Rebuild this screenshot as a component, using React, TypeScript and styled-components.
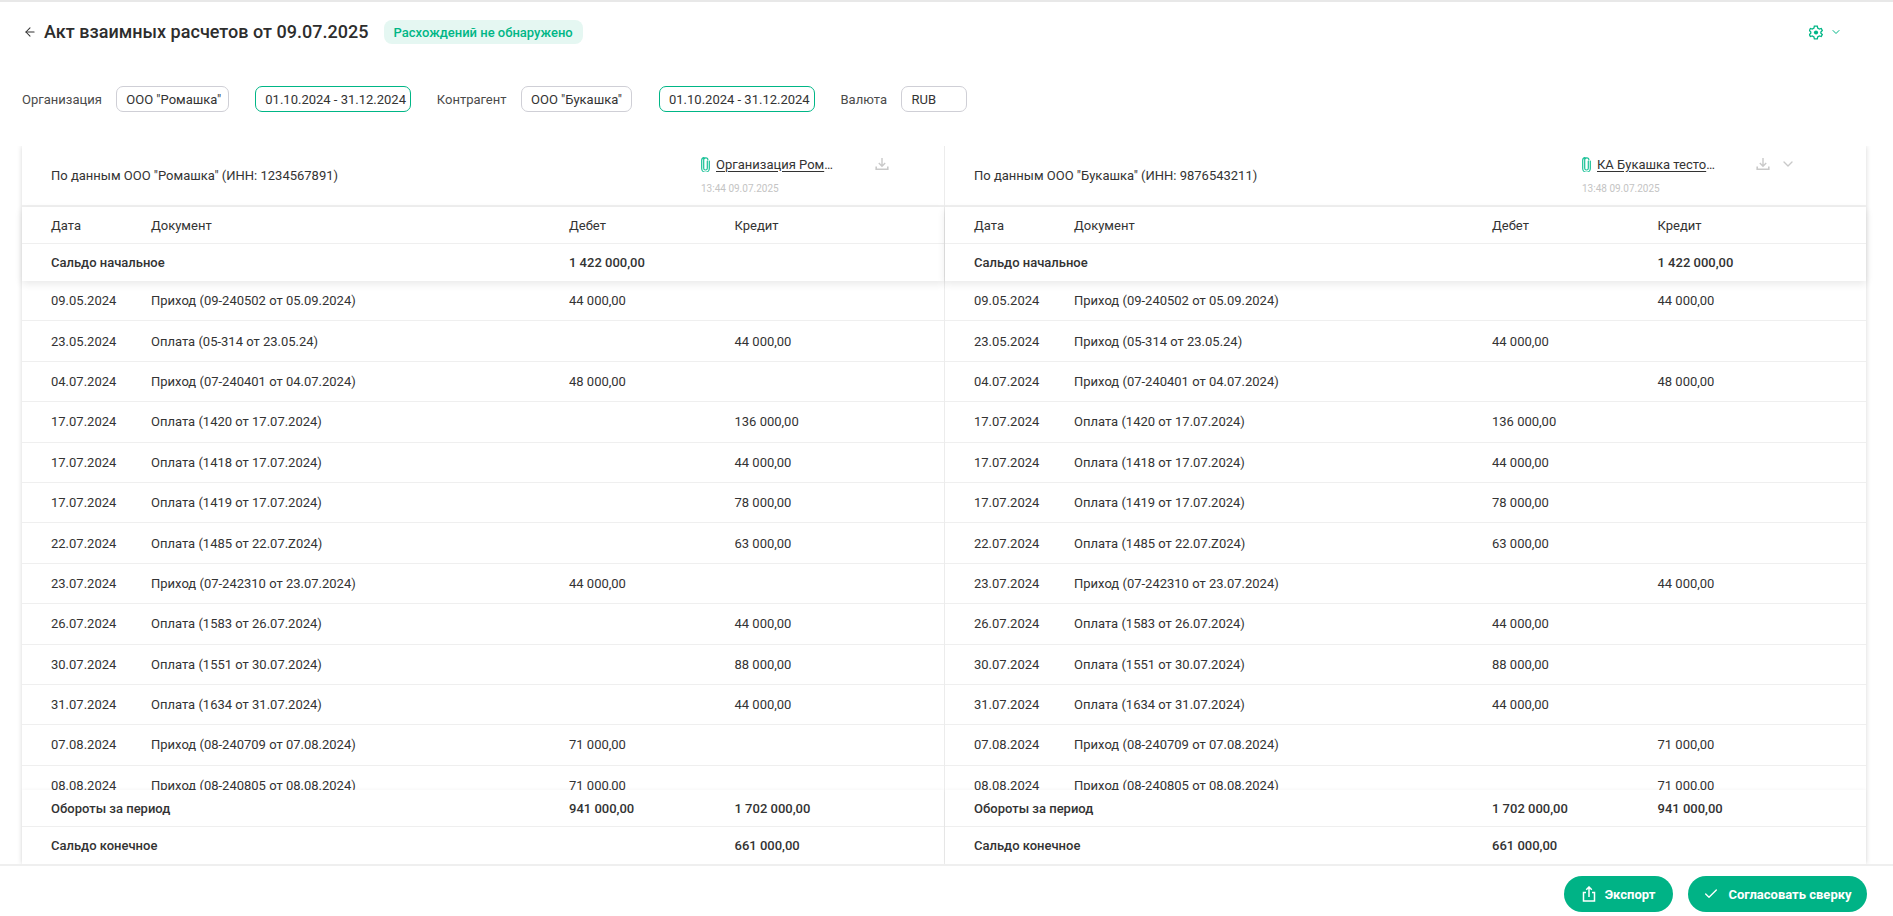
import React from "react";
import styled, { createGlobalStyle } from "styled-components";
import { ArrowLeft, Check, ChevronDown } from "lucide-react";

const Global = createGlobalStyle`
  html, body { margin: 0; padding: 0; background: #fff; }
  body { font-family: Roboto, "Liberation Sans", sans-serif; color: #333; overflow: hidden; }
  * { box-sizing: border-box; }
`;

const GREEN = "#00b686";

const Page = styled.div`
  width: 1893px;
  height: 916px;
  display: flex;
  flex-direction: column;
  border-top: 2px solid #e8e8e8;
  margin-top: 0;
  overflow: hidden;
`;
const TopBar = styled.header`
  height: 60px;
  flex: none;
  display: flex;
  align-items: center;
  padding: 0 0 0 23px;
`;
const Back = styled.span`
  display: flex;
  color: #333;
  margin-right: 7px;
`;
const Title = styled.h1`
  margin: 0;
  font-size: 18px;
  line-height: 24px;
  font-weight: 500;
  color: #2d2d2d;
  letter-spacing: 0.02px;
`;
const Badge = styled.span`
  margin-left: 15px;
  height: 24px;
  padding: 0 10px;
  display: flex;
  align-items: center;
  border-radius: 8px;
  background: #e5f7f2;
  color: ${GREEN};
  font-size: 13px;
  font-weight: 500;
`;
const Gear = styled.span`
  margin-left: auto;
  margin-right: 51px;
  display: flex;
  align-items: center;
  gap: 7px;
  color: ${GREEN};
`;
const Filters = styled.div`
  height: 26px;
  flex: none;
  margin-top: 24px;
  padding-left: 22px;
  display: flex;
  align-items: center;
`;
const FilterLabel = styled.span<{ $gap: number }>`
  font-size: 13px;
  color: #4a4a4a;
  margin-right: ${(p) => p.$gap}px;
`;
const FilterBox = styled.span<{ $active?: boolean; $w: number; $after: number }>`
  width: ${(p) => p.$w}px;
  height: 26px;
  margin-right: ${(p) => p.$after}px;
  display: flex;
  align-items: center;
  padding-left: 9.5px;
  border-radius: 7px;
  border: 1px solid ${(p) => (p.$active ? GREEN : "#cfcfd6")};
  font-size: 13px;
  color: #333;
  white-space: nowrap;
`;
const Card = styled.section`
  flex: none;
  width: 1844px;
  height: 718px;
  margin: 34px 0 0 22px;
  display: grid;
  grid-template-columns: 923px 921px;
  box-shadow: 0 0 5px rgba(0, 0, 0, 0.16);
  clip-path: inset(0 -8px 0 -8px);
`;
const Panel = styled.div<{ $divided?: boolean }>`
  display: flex;
  flex-direction: column;
  min-width: 0;
  height: 718px;
  ${(p) => (p.$divided ? "border-right: 1px solid #ececec;" : "")}
`;
const PanelHead = styled.div`
  height: 61px;
  flex: none;
  border-bottom: 2px solid #f0f0f0;
  display: flex;
  align-items: center;
  padding-left: 29px;
  position: relative;
  font-size: 13px;
`;
const PanelTitle = styled.div`
  width: 627px;
  flex: none;
  padding-top: 0;
`;
const FileBlock = styled.div`
  display: flex;
  flex-direction: column;
  margin-top: -1px;
`;
const FileTop = styled.div`
  display: flex;
  align-items: center;
  height: 18px;
`;
const FileName = styled.span`
  width: 123px;
  margin-left: 6px;
  white-space: nowrap;
  overflow: hidden;
  text-overflow: ellipsis;
  font-size: 13px;
  text-decoration: underline;
  text-underline-offset: 2px;
  color: #333;
`;
const FileTime = styled.div`
  margin-top: 10px;
  font-size: 10px;
  line-height: 12px;
  color: #c4c4c4;
`;
const IconSlot = styled.span<{ $ml: number }>`
  margin-left: ${(p) => p.$ml}px;
  display: flex;
  color: #c9c9c9;
`;
const Row = styled.div<{ $h?: string; $strong?: boolean; $line?: boolean }>`
  height: ${(p) => p.$h ?? "40.4px"};
  flex: none;
  display: grid;
  grid-template-columns: 100px 418px 165.5px 1fr;
  align-items: center;
  padding-left: 29px;
  font-size: 13px;
  color: #333;
  font-weight: ${(p) => (p.$strong ? 500 : 400)};
  ${(p) => (p.$line === false ? "" : "border-bottom: 1px solid #efefef;")}
  white-space: nowrap;
`;
const Fixed = styled.div`
  position: relative;
  z-index: 2;
  background: #fff;
  flex: none;
`;
const Shadowed = styled(Fixed)`
  box-shadow: 0 3px 8px rgba(0, 0, 0, 0.09);
`;
const Body = styled.div`
  height: 509px;
  flex: none;
  overflow: hidden;
`;
const TotalsBox = styled(Fixed)`
  box-shadow: 0 -1px 3px rgba(0, 0, 0, 0.03);
`;
const Span2 = styled.span`
  grid-column: span 2;
`;
const Footer = styled.footer`
  flex: 1;
  border-top: 2px solid #efefef;
  display: flex;
  justify-content: flex-end;
  align-items: flex-start;
  gap: 15px;
  padding: 10px 26px 0 0;
  position: relative;
  z-index: 3;
  background: #fff;
`;
const Action = styled.button<{ $w: number }>`
  width: ${(p) => p.$w}px;
  height: 36px;
  border: 0;
  border-radius: 18px;
  background: #00b386;
  color: #fff;
  font-family: inherit;
  font-size: 13px;
  font-weight: 700;
  display: flex;
  align-items: center;
  justify-content: center;
  gap: 9px;
  padding: 0;
`;

const Clip = () => (
  <svg width="9" height="15" viewBox="0 0 9 15" fill="none" stroke="#18c096" strokeWidth="1.2" strokeLinecap="round">
    <path d="M6.3 4v7.2a1.8 1.8 0 0 1-3.6 0V3a2.1 2.1 0 0 1 4.2-.2M8.3 4v7.5a3.8 3.8 0 0 1-7.6 0V3.2A2.6 2.6 0 0 1 3 .7" />
  </svg>
);
const Tray = () => (
  <svg width="14" height="14" viewBox="0 0 14 14" fill="none" stroke="currentColor" strokeWidth="1.4">
    <path d="M7 1v8M3.8 6 7 9.2 10.2 6" />
    <path d="M1.2 9.5v2.8h11.6V9.5" strokeWidth="1.6" />
  </svg>
);
const GearIcon = () => (
  <svg width="14" height="15" viewBox="0 0 14 15" fill="none" stroke="currentColor" strokeWidth="1.3">
    <path d="M5.5 1h3l.4 2 1.7 1 1.9-.6 1 2.1-1.4 1.4v1.2l1.4 1.4-1 2.1-1.9-.6-1.7 1-.4 2h-3l-.4-2-1.7-1-1.9.6-1-2.1 1.4-1.4V6.9L.5 5.5l1-2.1 1.9.6 1.7-1z" transform="translate(-.1 .1) scale(.99)" />
    <circle cx="7" cy="7.5" r="2.1" fill="currentColor" stroke="none" />
  </svg>
);
const ShareIcon = () => (
  <svg width="14" height="16" viewBox="0 0 14 16" fill="none" stroke="#fff" strokeWidth="1.5">
    <path d="M4 6.5H1.5v8.5h11V6.5H10" />
    <path d="M7 11V1.2M4.2 3.8 7 1l2.8 2.8" />
  </svg>
);

type D = [string, string, string, string];
const left: D[] = [
  ["09.05.2024", "Приход (09-240502 от 05.09.2024)", "44 000,00", ""],
  ["23.05.2024", "Оплата (05-314 от 23.05.24)", "", "44 000,00"],
  ["04.07.2024", "Приход (07-240401 от 04.07.2024)", "48 000,00", ""],
  ["17.07.2024", "Оплата (1420 от 17.07.2024)", "", "136 000,00"],
  ["17.07.2024", "Оплата (1418 от 17.07.2024)", "", "44 000,00"],
  ["17.07.2024", "Оплата (1419 от 17.07.2024)", "", "78 000,00"],
  ["22.07.2024", "Оплата (1485 от 22.07.Z024)", "", "63 000,00"],
  ["23.07.2024", "Приход (07-242310 от 23.07.2024)", "44 000,00", ""],
  ["26.07.2024", "Оплата (1583 от 26.07.2024)", "", "44 000,00"],
  ["30.07.2024", "Оплата (1551 от 30.07.2024)", "", "88 000,00"],
  ["31.07.2024", "Оплата (1634 от 31.07.2024)", "", "44 000,00"],
  ["07.08.2024", "Приход (08-240709 от 07.08.2024)", "71 000,00", ""],
  ["08.08.2024", "Приход (08-240805 от 08.08.2024)", "71 000,00", ""],
];
const right: D[] = left.map(([a, b, c, d], i) => [
  a,
  i === 1 ? "Приход (05-314 от 23.05.24)" : b,
  d,
  c,
]);

const Side: React.FC<{
  title: string;
  file: string;
  time: string;
  rows: D[];
  deb: [string, string, string];
  cred: [string, string, string];
  iconGap: number;
  titleW: number;
  chevron?: boolean;
  divided?: boolean;
}> = ({ title, file, time, rows, deb, cred, iconGap, titleW, chevron, divided }) => (
  <Panel $divided={divided}>
    <PanelHead>
      <PanelTitle style={{ width: titleW }}>{title}</PanelTitle>
      <FileBlock>
        <FileTop>
          <Clip />
          <FileName>{file}</FileName>
          <IconSlot $ml={iconGap}>
            <Tray />
          </IconSlot>
          {chevron && (
            <IconSlot $ml={10}>
              <ChevronDown size={16} strokeWidth={2} />
            </IconSlot>
          )}
        </FileTop>
        <FileTime>{time}</FileTime>
      </FileBlock>
    </PanelHead>
    <Shadowed>
      <Row $h="37px" $strong={false}>
        <span>Дата</span>
        <span>Документ</span>
        <span>Дебет</span>
        <span>Кредит</span>
      </Row>
      <Row $h="37px" $strong $line={false}>
        <Span2>Сальдо начальное</Span2>
        <span>{deb[0]}</span>
        <span>{cred[0]}</span>
      </Row>
    </Shadowed>
    <Body>
      {rows.map((r, i) => (
        <Row key={i}>
          <span>{r[0]}</span>
          <span>{r[1]}</span>
          <span>{r[2]}</span>
          <span>{r[3]}</span>
        </Row>
      ))}
    </Body>
    <TotalsBox>
      <Row $h="37px" $strong>
        <Span2>Обороты за период</Span2>
        <span>{deb[1]}</span>
        <span>{cred[1]}</span>
      </Row>
      <Row $h="37px" $strong $line={false}>
        <Span2>Сальдо конечное</Span2>
        <span>{deb[2]}</span>
        <span>{cred[2]}</span>
      </Row>
    </TotalsBox>
  </Panel>
);

export default function App() {
  return (
    <>
      <Global />
      <Page>
        <TopBar>
          <Back>
            <ArrowLeft size={14} strokeWidth={1.8} />
          </Back>
          <Title>Акт взаимных расчетов от 09.07.2025</Title>
          <Badge>Расхождений не обнаружено</Badge>
          <Gear>
            <GearIcon />
            <ChevronDown size={12} strokeWidth={2} />
          </Gear>
        </TopBar>
        <Filters>
          <FilterLabel $gap={14}>Организация</FilterLabel>
          <FilterBox $w={113} $after={26}>ООО "Ромашка"</FilterBox>
          <FilterBox $w={156} $after={26} $active>01.10.2024 - 31.12.2024</FilterBox>
          <FilterLabel $gap={14}>Контрагент</FilterLabel>
          <FilterBox $w={111} $after={27}>ООО "Букашка"</FilterBox>
          <FilterBox $w={156} $after={26} $active>01.10.2024 - 31.12.2024</FilterBox>
          <FilterLabel $gap={14}>Валюта</FilterLabel>
          <FilterBox $w={66} $after={0}>RUB</FilterBox>
        </Filters>
        <Card>
          <Side
            divided
            title={'По данным ООО "Ромашка" (ИНН: 1234567891)'}
            file="Организация Ромашка тестовая"
            time="13:44 09.07.2025"
            rows={left}
            deb={["1 422 000,00", "941 000,00", ""]}
            cred={["", "1 702 000,00", "661 000,00"]}
            iconGap={36}
            titleW={650}
          />
          <Side
            title={'По данным ООО "Букашка" (ИНН: 9876543211)'}
            file="КА Букашка тестовая организация"
            time="13:48 09.07.2025"
            rows={right}
            deb={["", "1 702 000,00", "661 000,00"]}
            cred={["1 422 000,00", "941 000,00", ""]}
            iconGap={36}
            titleW={608}
            chevron
          />
        </Card>
        <Footer>
          <Action $w={109}>
            <ShareIcon />
            Экспорт
          </Action>
          <Action $w={179}>
            <Check size={16} strokeWidth={2} />
            Согласовать сверку
          </Action>
        </Footer>
      </Page>
    </>
  );
}
